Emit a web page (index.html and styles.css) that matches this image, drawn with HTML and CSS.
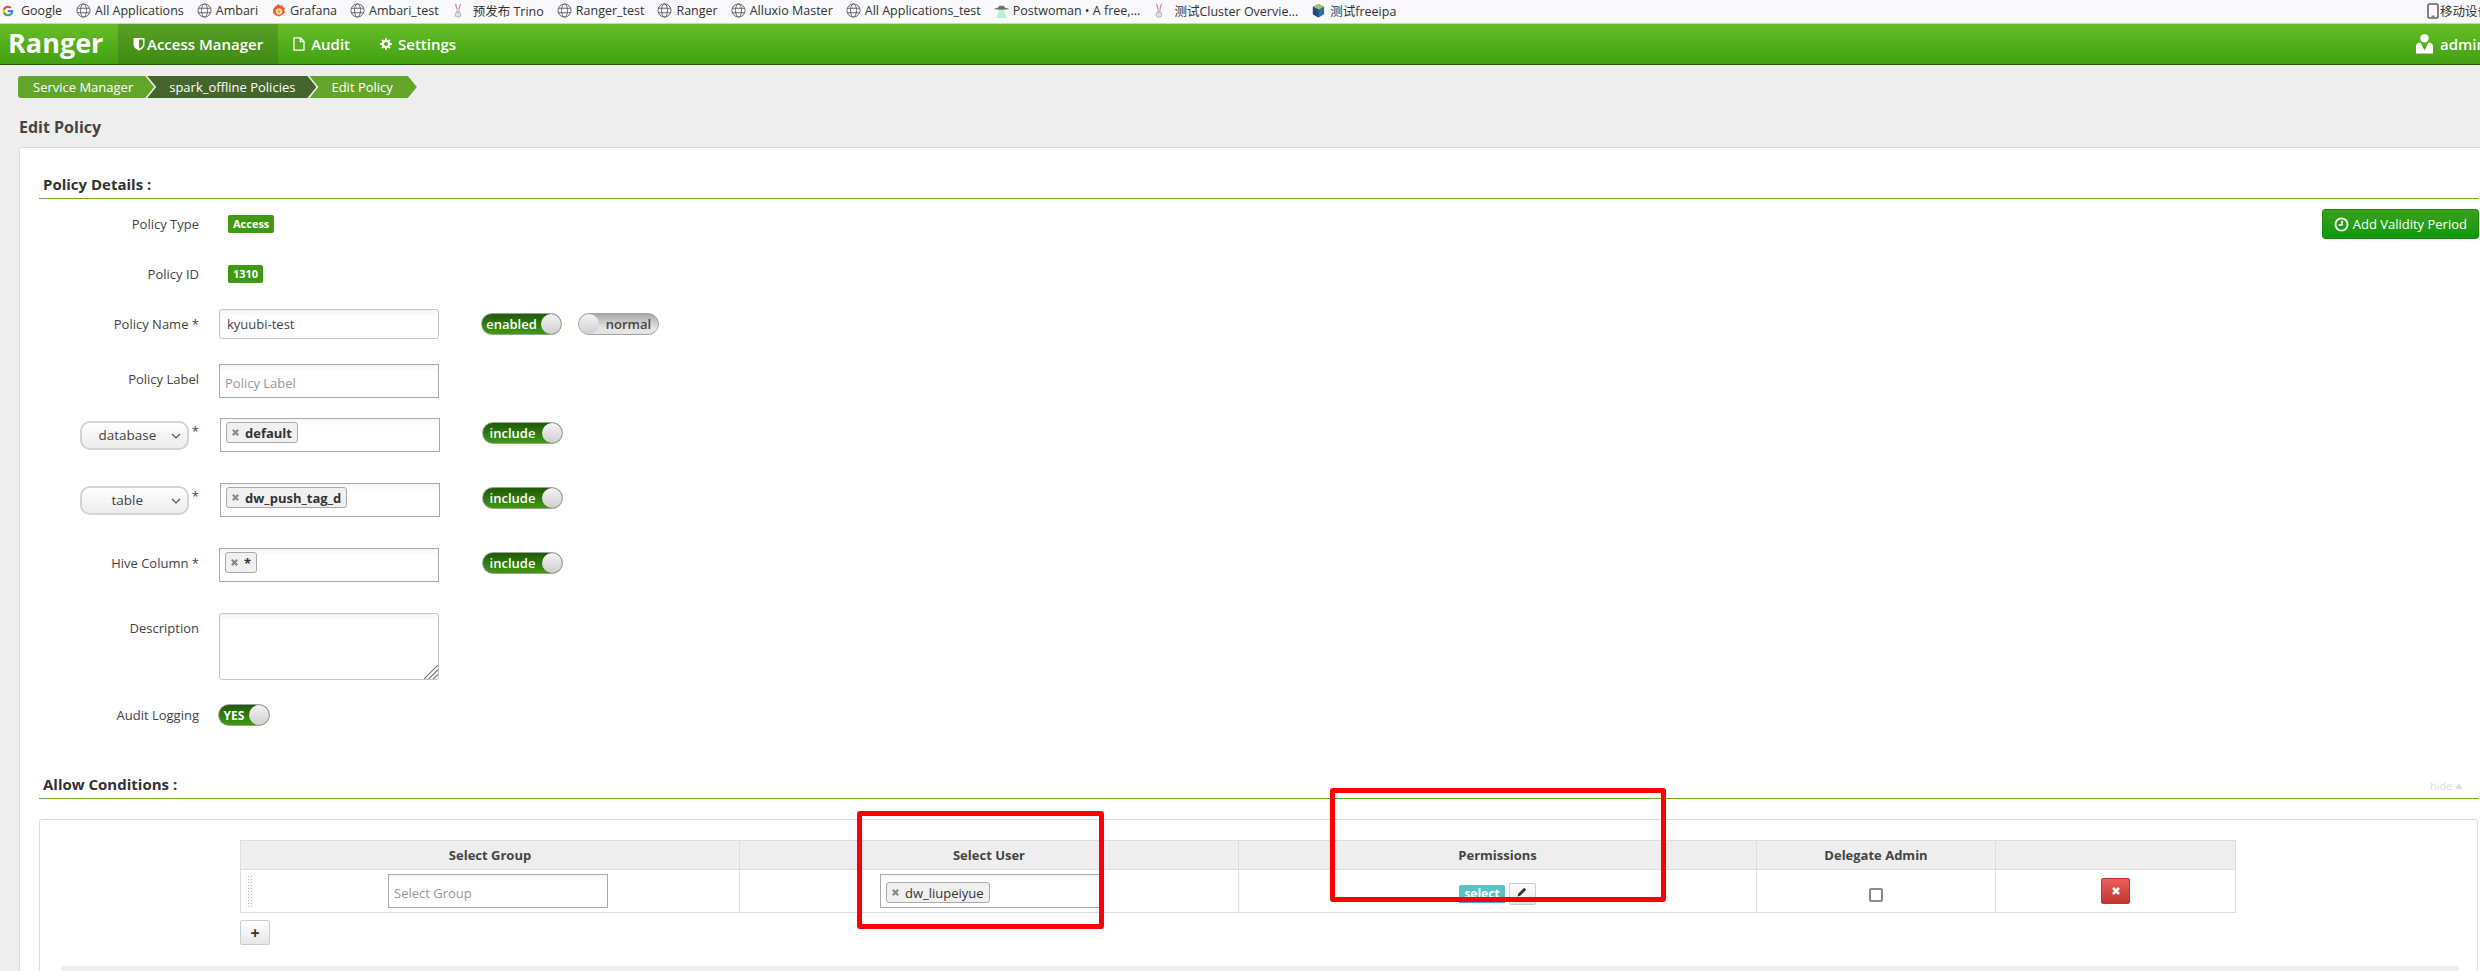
FILE: index.html
```html
<!DOCTYPE html>
<html lang="en">
<head>
  <meta charset="UTF-8">
  <title>Ranger - Edit Policy</title>
  <link rel="stylesheet" href="styles.css">
</head>
<body>
  <svg class="svg-defs" width="0" height="0">
    <symbol id="globe" viewBox="0 0 16 16">
      <g fill="none" stroke="#5f6368" stroke-width="1">
        <circle cx="8" cy="8" r="7"/>
        <ellipse cx="8" cy="8" rx="3.2" ry="7"/>
        <path d="M1.3 5.6h13.4M1.3 10.4h13.4"/>
      </g>
    </symbol>
    <symbol id="rabbit" viewBox="0 0 14 18">
      <path d="M4 1l2 7M10 1L8 8" stroke="#ee6fae" stroke-width="1.4" fill="none"/>
      <circle cx="7" cy="10" r="2.4" fill="#c9cdc8"/>
      <ellipse cx="7" cy="14" rx="3.6" ry="3" fill="#dfe2dd" stroke="#8d938c" stroke-width=".7"/>
    </symbol>
    <symbol id="toggle-x" viewBox="0 0 10 10">
      <path d="M2 2l6 6M8 2l-6 6" stroke="#888" stroke-width="2.4" fill="none"/>
    </symbol>
  </svg>

  <!-- Bookmarks -->
  <div class="bookmarks">
    <div class="bookmark first">
      <svg class="fav fav-g" viewBox="0 0 16 16"><path d="M15 8.200c0-.6 0-1-.1-1.500H8v2.900h4a3.400 3.400 0 0 1-1.500 2.200l2.300 1.800A7 7 0 0 0 15 8.200z" fill="#4285f4"/><path d="M8 15a6.900 6.900 0 0 0 4.800-1.800l-2.300-1.800A4.300 4.300 0 0 1 3.900 9.200L1.500 11A7 7 0 0 0 8 15z" fill="#34a853"/><path d="M3.900 9.200a4.300 4.300 0 0 1 0-2.500L1.500 4.900a7 7 0 0 0 0 6.200z" fill="#fbbc05"/><path d="M8 3.800c1 0 2 .4 2.700 1.100l2-2A7 7 0 0 0 1.500 4.900l2.400 1.800A4.200 4.200 0 0 1 8 3.800z" fill="#ea4335"/></svg>
      Google
    </div>
    <div class="bookmark"><svg class="fav"><use href="#globe"/></svg>All Applications</div>
    <div class="bookmark"><svg class="fav"><use href="#globe"/></svg>Ambari</div>
    <div class="bookmark">
      <svg class="fav" viewBox="0 0 16 16"><path d="M8 1l1.500 2 2.500-1 .5 2.500 2.500.7-1 2.300 1 2.500-3 2.500-3.500 2-4-1.500L2 10l.5-4L5 3.500z" fill="#f15a24"/><circle cx="8.500" cy="9" r="3.300" fill="#fbe3c4"/><circle cx="8.500" cy="9" r="1.600" fill="#f9a11b"/></svg>
      Grafana
    </div>
    <div class="bookmark"><svg class="fav"><use href="#globe"/></svg>Ambari_test</div>
    <div class="bookmark"><svg class="fav fav-thin"><use href="#rabbit"/></svg>预发布 Trino</div>
    <div class="bookmark"><svg class="fav"><use href="#globe"/></svg>Ranger_test</div>
    <div class="bookmark"><svg class="fav"><use href="#globe"/></svg>Ranger</div>
    <div class="bookmark"><svg class="fav"><use href="#globe"/></svg>Alluxio Master</div>
    <div class="bookmark"><svg class="fav"><use href="#globe"/></svg>All Applications_test</div>
    <div class="bookmark">
      <svg class="fav" viewBox="0 0 16 16"><path d="M5.500 7L2.500 16h11l-3-9z" fill="#b5f2cf"/><path d="M0 6.500C3 5 5 5.500 5.500 3h5c.5 2.500 2.500 2 5.500 3.500-3 1-13 1-16 0z" fill="#6d7470"/></svg>
      Postwoman • A free,...
    </div>
    <div class="bookmark"><svg class="fav fav-thin"><use href="#rabbit"/></svg>测试Cluster Overvie...</div>
    <div class="bookmark">
      <svg class="fav" viewBox="0 0 16 16"><path d="M8 1l6 3v8l-6 3.500L2 12V4z" fill="#2f6ea5"/><path d="M8 1l6 3-6 3-6-3z" fill="#a8c64e"/><path d="M8 7v8.500L2 12V4z" fill="#1f4f82"/></svg>
      测试freeipa
    </div>
    <div class="bookmark bookmark-mobile">
      <svg class="fav-phone" viewBox="0 0 12 16"><rect x="1" y="1" width="10" height="14" rx="1.500" fill="none" stroke="#5f6368" stroke-width="1.600"/><path d="M4.500 13.200h3" stroke="#5f6368" stroke-width="1.200"/></svg>
      移动设备
    </div>
  </div>

  <!-- Navbar -->
  <div class="navbar">
    <div class="brand">Ranger</div>
    <div class="nav-item active">
      <svg class="nav-icon" viewBox="0 0 12 14"><path d="M.5 1h11v6.500c0 3-3 5-5.500 6C3.500 12.500.5 10.500.5 7.500z" fill="#fff"/><path d="M6 2.500h4v5c0 2-2 3.300-4 4.300z" fill="#4f9420"/></svg>
      Access Manager
    </div>
    <div class="nav-item">
      <svg class="nav-icon" viewBox="0 0 12 14"><path d="M1 .8h6.500L11 4.300v8.900H1zM7.300 1v3.500H11" fill="none" stroke="#fff" stroke-width="1.300"/></svg>
      Audit
    </div>
    <div class="nav-item">
      <svg class="nav-icon" viewBox="0 0 14 14"><circle cx="7" cy="7" r="3.700" fill="none" stroke="#fff" stroke-width="2.600"/><path d="M7 .3v13.400M.3 7h13.400M2.300 2.300l9.400 9.400M11.700 2.300l-9.400 9.400" stroke="#fff" stroke-width="2.200" stroke-dasharray="2.400 8.600"/></svg>
      Settings
    </div>
    <div class="nav-user">
      <svg class="user-icon" viewBox="0 0 17 20"><circle cx="8.500" cy="4.300" r="4.200" fill="#fff"/><path d="M0 19.500V12c0-2 2-3.300 4.500-3.500l4 8 4-8c2.500.2 4.500 1.500 4.500 3.500v7.500z" fill="#fff"/><path d="M7.500 9h2l-1 5z" fill="#5cb022"/></svg>
      admin
    </div>
  </div>

  <div class="page">
    <div class="breadcrumb">
      <div class="crumb crumb-first">Service Manager</div>
      <div class="crumb crumb-dark">spark_offline Policies</div>
      <div class="crumb crumb-last">Edit Policy</div>
    </div>
    <h1 class="page-title">Edit Policy</h1>

    <div class="card">
      <h2 class="section-title">Policy Details :</h2>
      <div class="details">
        <div class="form">
          <div class="form-row row-type">
            <label class="form-label short">Policy Type</label>
            <div class="form-control"><span class="badge">Access</span></div>
          </div>
          <div class="form-row row-id">
            <label class="form-label short">Policy ID</label>
            <div class="form-control"><span class="badge">1310</span></div>
          </div>
          <div class="form-row row-name">
            <label class="form-label">Policy Name *</label>
            <div class="form-control"><div class="input input-round">kyuubi-test</div></div>
            <div class="toggles">
              <div class="toggle"><span class="toggle-text">enabled</span><span class="knob"></span></div>
              <div class="toggle toggle-off"><span class="knob"></span><span class="toggle-text">normal</span></div>
            </div>
          </div>
          <div class="form-row row-label">
            <label class="form-label">Policy Label</label>
            <div class="form-control"><div class="input input-tall placeholder">Policy Label</div></div>
          </div>
          <div class="form-row row-resource">
            <div class="form-label select-label">
              <div class="select-box"><span>database</span><svg class="chevron" viewBox="0 0 10 6"><path d="M1 1l4 4 4-4" fill="none" stroke="#555" stroke-width="1.200"/></svg></div>
              <span class="star">*</span>
            </div>
            <div class="form-control shifted"><div class="input input-tall"><span class="tag tag-bold"><svg class="tag-x"><use href="#toggle-x"/></svg>default</span></div></div>
            <div class="toggles toggles-resource"><div class="toggle"><span class="toggle-text">include</span><span class="knob"></span></div></div>
          </div>
          <div class="form-row row-resource">
            <div class="form-label select-label">
              <div class="select-box"><span>table</span><svg class="chevron" viewBox="0 0 10 6"><path d="M1 1l4 4 4-4" fill="none" stroke="#555" stroke-width="1.200"/></svg></div>
              <span class="star">*</span>
            </div>
            <div class="form-control shifted"><div class="input input-tall"><span class="tag tag-bold"><svg class="tag-x"><use href="#toggle-x"/></svg>dw_push_tag_d</span></div></div>
            <div class="toggles toggles-resource"><div class="toggle"><span class="toggle-text">include</span><span class="knob"></span></div></div>
          </div>
          <div class="form-row row-resource">
            <label class="form-label">Hive Column *</label>
            <div class="form-control"><div class="input input-tall"><span class="tag tag-bold"><svg class="tag-x"><use href="#toggle-x"/></svg>*</span></div></div>
            <div class="toggles toggles-wide"><div class="toggle"><span class="toggle-text">include</span><span class="knob"></span></div></div>
          </div>
          <div class="form-row row-desc">
            <label class="form-label">Description</label>
            <div class="form-control">
              <div class="input textarea">
                <svg class="resize" viewBox="0 0 12 12"><path d="M12 0L0 12M12 4l-8 8M12 8l-4 4" stroke="#777" stroke-width="1"/></svg>
              </div>
            </div>
          </div>
          <div class="form-row row-audit">
            <label class="form-label audit-label">Audit Logging</label>
            <div class="form-control"><div class="toggle toggle-yes"><span class="toggle-text">YES</span><span class="knob"></span></div></div>
          </div>
        </div>
        <button class="btn-validity">
          <svg class="clock" viewBox="0 0 16 16"><circle cx="8" cy="8" r="6.500" fill="none" stroke="#fff" stroke-width="2"/><path d="M8.500 4v4.500H5" fill="none" stroke="#fff" stroke-width="1.700"/></svg>
          Add Validity Period
        </button>
      </div>

      <h2 class="section-title allow-title">Allow Conditions :<span class="hide-link">hide <span class="hide-arrow">▲</span></span></h2>
      <div class="conditions">
        <table class="perm-table">
          <thead>
            <tr>
              <th class="col-group">Select Group</th>
              <th class="col-user">Select User</th>
              <th class="col-perm">Permissions</th>
              <th class="col-admin">Delegate Admin</th>
              <th></th>
            </tr>
          </thead>
          <tbody>
            <tr>
              <td class="cell-group"><span class="drag"></span><div class="input table-input placeholder">Select Group</div></td>
              <td><div class="input table-input user-input"><span class="tag"><svg class="tag-x"><use href="#toggle-x"/></svg>dw_liupeiyue</span></div></td>
              <td class="cell-perm">
                <span class="perm-label">select</span><button class="btn-edit"><svg viewBox="0 0 12 12"><path d="M1.500 10.500l.7-2.700 6-6 2 2-6 6z" fill="#333"/></svg></button>
              </td>
              <td class="cell-perm"><span class="checkbox"></span></td>
              <td><button class="btn-delete"><svg viewBox="0 0 10 10"><path d="M2 2l6 6M8 2l-6 6" stroke="#fff" stroke-width="2.600"/></svg></button></td>
            </tr>
          </tbody>
        </table>
        <button class="btn-add">+</button>
        <div class="band"></div>
      </div>
    </div>
  </div>

  <!-- hand drawn marks on the screenshot -->
  <div class="mark mark-user"></div>
  <div class="mark mark-perm"></div>
</body>
</html>
```
FILE: styles.css
```css
* {
  box-sizing: border-box;
}
body {
  margin: 0;
  height: 971px;
  overflow: hidden;
  position: relative;
  background-color: #eeeeee;
  color: #444444;
  font-family: 'Open Sans', 'Noto Sans CJK SC', sans-serif;
  font-size: 13px;
}
.svg-defs {
  position: absolute;
}

/* bookmarks */
.bookmarks {
  display: flex;
  align-items: center;
  gap: 13px;
  height: 24px;
  padding-left: 2px;
  padding-bottom: 2px;
  background-color: #f9f9fb;
  border-bottom: 1px solid #d0d0d4;
  color: #333333;
  font-size: 12.5px;
  white-space: nowrap;
}
.bookmark {
  display: flex;
  align-items: center;
  gap: 4px;
}
.bookmark.first {
  gap: 7px;
  margin-right: 1px;
}
.fav {
  width: 15px;
  height: 15px;
  flex-shrink: 0;
}
.fav-g {
  width: 12px;
  height: 12px;
}
.fav-thin {
  width: 12px;
  margin-right: 5px;
}
.bookmark-mobile {
  position: absolute;
  left: 2427px;
  top: 1px;
  gap: 1px;
}
.fav-phone {
  width: 12px;
  height: 16px;
}

/* navbar */
.navbar {
  display: flex;
  align-items: stretch;
  height: 41px;
  background: linear-gradient(#66bd28, #42a010);
  border-bottom: 1px solid #1e5a06;
  color: #ffffff;
}
.brand {
  width: 118px;
  padding-left: 8px;
  font-size: 27px;
  font-weight: 700;
  line-height: 38px;
}
.nav-item {
  display: flex;
  align-items: center;
  gap: 6px;
  padding: 0 15px;
  font-size: 15px;
  font-weight: 600;
}
.nav-item.active {
  gap: 2px;
  background: linear-gradient(#589f26, #3f8a13);
}
.nav-icon {
  height: 14px;
  width: 12px;
  flex-shrink: 0;
}
.nav-user {
  display: flex;
  align-items: center;
  gap: 7px;
  position: absolute;
  left: 2416px;
  top: 24px;
  height: 40px;
  font-size: 15px;
  font-weight: 600;
}
.user-icon {
  width: 17px;
  height: 20px;
}

/* breadcrumb */
.page {
  padding-top: 11px;
}
.breadcrumb {
  display: flex;
  margin-left: 18px;
  height: 22px;
  font-size: 13px;
  color: #ffffff;
}
.crumb {
  display: flex;
  align-items: center;
  margin-right: -7px;
  padding: 0 21px 0 22px;
  background-color: #63a52b;
  clip-path: polygon(0 0, calc(100% - 9px) 0, 100% 50%, calc(100% - 9px) 100%, 0 100%, 9px 50%);
}
.crumb-first {
  padding-left: 15px;
  border-radius: 3px 0 0 3px;
  clip-path: polygon(0 0, calc(100% - 9px) 0, 100% 50%, calc(100% - 9px) 100%, 0 100%);
}
.crumb-dark {
  background-color: #44652b;
}
.crumb-last {
  padding-right: 24px;
}
.page-title {
  margin: 18px 0 9px 19px;
  font-size: 16px;
  line-height: 22px;
  font-weight: 700;
  color: #444444;
}

/* card */
.card {
  margin-left: 19px;
  margin-right: -30px;
  padding: 25px 30px 0 19px;
  background-color: #ffffff;
  border: 1px solid #dddddd;
  border-radius: 3px;
  min-height: 820px;
}
.section-title {
  position: relative;
  margin: 0;
  padding: 0 0 3px 4px;
  height: 26px;
  border-bottom: 1px solid #63a921;
  color: #333333;
  font-size: 15px;
  line-height: 22px;
  font-weight: 700;
}
.allow-title {
  margin-top: 47px;
}
.hide-link {
  position: absolute;
  left: 2391px;
  top: 2px;
  color: #dddddd;
  font-size: 11px;
  font-weight: 400;
}
.hide-arrow {
  font-size: 7px;
  vertical-align: 1px;
}
.details {
  display: flex;
  justify-content: space-between;
}

/* form rows */
.form {
  padding-top: 15px;
}
.form-row {
  display: flex;
  align-items: flex-start;
}
.row-type { height: 50px; }
.row-id { height: 45px; }
.row-name { height: 55px; }
.row-label { height: 54px; }
.row-resource { height: 65px; }
.row-desc { height: 91px; }
.row-audit { height: 22px; }
.form-label {
  width: 160px;
  text-align: right;
  line-height: 30px;
  flex-shrink: 0;
}
.form-label.short {
  line-height: 20px;
}
.audit-label {
  line-height: 22px;
}
.select-label {
  display: flex;
  justify-content: flex-end;
  gap: 3px;
  padding-top: 3px;
  line-height: 20px;
}
.star {
  line-height: 20px;
}
.form-control {
  width: 220px;
  margin-left: 20px;
  flex-shrink: 0;
}
.form-control.shifted {
  margin-left: 21px;
}
.toggles {
  display: flex;
  gap: 16px;
  margin-top: 4px;
  margin-left: 42px;
}
.toggles-resource {
  margin-left: 42px;
}
.toggles-wide {
  margin-left: 43px;
}
.badge {
  display: inline-block;
  height: 18px;
  padding: 0 5px;
  margin-left: 9px;
  background-color: #3d9a12;
  border-radius: 2px;
  color: #ffffff;
  font-size: 11px;
  font-weight: 700;
  line-height: 18px;
}
.input {
  display: block;
  height: 30px;
  padding: 0 7px;
  background: linear-gradient(#f4f4f4, #ffffff 7px);
  border: 1px solid #aaaaaa;
  color: #444444;
  font-size: 13px;
  line-height: 28px;
}
.input-round {
  border-color: #c4c4c4;
  border-radius: 3px;
}
.input-tall {
  display: flex;
  align-items: flex-start;
  height: 34px;
  padding: 3px 5px;
}
.placeholder {
  color: #999999;
  padding: 0 5px;
  line-height: 36px;
}
.textarea {
  position: relative;
  height: 67px;
  border-color: #c4c4c4;
  border-radius: 3px;
}
.resize {
  position: absolute;
  right: 0;
  bottom: 0;
  width: 14px;
  height: 14px;
}
.tag {
  display: inline-flex;
  align-items: center;
  height: 21px;
  padding: 0 5px 0 4px;
  background-color: #f0f0f0;
  border: 1px solid #aaaaaa;
  border-radius: 3px;
  color: #333333;
  font-size: 13px;
}
.tag-bold {
  font-weight: 700;
}
.tag-x {
  width: 9px;
  height: 9px;
  margin-right: 5px;
}
.select-box {
  position: relative;
  width: 109px;
  height: 29px;
  padding-right: 14px;
  background: linear-gradient(#ffffff, #ececec);
  border: 2px solid #d4d4d4;
  border-radius: 10px;
  text-align: center;
  font-size: 13.5px;
  line-height: 25px;
}
.chevron {
  position: absolute;
  right: 6px;
  top: 10px;
  width: 10px;
  height: 6px;
}

/* toggles */
.toggle {
  display: flex;
  align-items: center;
  width: 81px;
  height: 22px;
  background: linear-gradient(#1f5a08, #3f9a10);
  border: 1px solid #a0a0a0;
  border-radius: 11px;
  color: #ffffff;
  font-size: 13px;
  font-weight: 600;
}
.toggle-text {
  flex: 1;
  text-align: center;
}
.knob {
  flex-shrink: 0;
  width: 20px;
  height: 20px;
  background: linear-gradient(#f4f4f4, #cfcfcf);
  border-radius: 50%;
}
.toggle-off {
  background: linear-gradient(#a8a8a8, #e4e4e4 70%);
  color: #444444;
}
.toggle-yes {
  width: 52px;
  margin-left: -1px;
  font-size: 12px;
  font-weight: 700;
}

/* buttons */
.btn-validity {
  display: flex;
  align-items: center;
  gap: 4px;
  height: 30px;
  margin-top: 10px;
  padding: 0 11px;
  background: linear-gradient(#3ba01a, #0f9a0f);
  border: 1px solid #1f8a12;
  border-radius: 3px;
  color: #ffffff;
  font-family: 'Open Sans', sans-serif;
  font-size: 13px;
}
.clock {
  width: 15px;
  height: 15px;
}

/* conditions table */
.conditions {
  margin-top: 20px;
  margin-right: 1px;
  padding: 20px 0 0 21px;
  height: 300px;
  background-color: #ffffff;
  border: 1px solid #dddddd;
  border-radius: 3px;
}
.perm-table {
  margin-left: 179px;
  width: 1996px;
  table-layout: fixed;
  border-collapse: collapse;
}
.perm-table th, .perm-table td {
  border: 1px solid #dddddd;
  text-align: center;
  padding: 0;
}
.perm-table th {
  height: 29px;
  background-color: #eeeeee;
  font-size: 13px;
  font-weight: 700;
}
.perm-table td {
  height: 43px;
}
.perm-table td.cell-perm {
  padding-top: 5px;
}
.col-group, .col-user { width: 499px; }
.col-perm { width: 518px; }
.col-admin { width: 239px; }
.cell-group {
  position: relative;
}
.drag {
  position: absolute;
  left: 6px;
  top: 5px;
  width: 6px;
  height: 34px;
  background-image: radial-gradient(circle, #bbbbbb 1px, transparent 1px);
  background-size: 3px 3px;
}
.table-input {
  width: 220px;
  height: 34px;
  margin-left: 147px;
  text-align: left;
}
.user-input {
  margin-left: 140px;
  padding: 3px 5px;
}
.perm-label {
  display: inline-block;
  height: 18px;
  padding: 0 5px;
  margin-right: 4px;
  background-color: #5bc0c8;
  border-radius: 2px 2px 0 0;
  border-bottom: 1px dotted #3a9ad9;
  color: #ffffff;
  font-size: 12px;
  font-weight: 700;
  line-height: 17px;
  vertical-align: middle;
}
.btn-edit {
  width: 27px;
  height: 22px;
  padding: 0;
  background: linear-gradient(#ffffff, #e6e6e6);
  border: 1px solid #cccccc;
  border-radius: 2px;
  vertical-align: middle;
}
.btn-edit svg {
  width: 12px;
  height: 12px;
}
.checkbox {
  display: inline-block;
  width: 14px;
  height: 14px;
  background-color: #ffffff;
  border: 2px solid #8a8a9a;
  border-radius: 2px;
  vertical-align: middle;
}
.btn-delete {
  width: 29px;
  height: 26px;
  padding: 0;
  background: linear-gradient(#ee5f5b, #bd362f);
  border: 1px solid #c9302c;
  border-radius: 2px;
  vertical-align: middle;
}
.btn-delete svg {
  width: 10px;
  height: 10px;
}
.btn-add {
  display: block;
  width: 30px;
  height: 25px;
  margin: 7px 0 0 179px;
  padding: 0;
  background: linear-gradient(#ffffff, #e6e6e6);
  border: 1px solid #cccccc;
  border-radius: 2px;
  color: #333333;
  font-family: 'Open Sans', sans-serif;
  font-size: 16px;
  font-weight: 700;
  line-height: 20px;
}
.band {
  margin-top: 21px;
  width: 2398px;
  height: 60px;
  background-color: #eeeeee;
}

/* red marks */
.mark {
  position: absolute;
  border: 5px solid #ff0000;
  border-radius: 3px;
}
.mark-user {
  left: 857px;
  top: 811px;
  width: 247px;
  height: 118px;
}
.mark-perm {
  left: 1330px;
  top: 788px;
  width: 336px;
  height: 114px;
}
```
